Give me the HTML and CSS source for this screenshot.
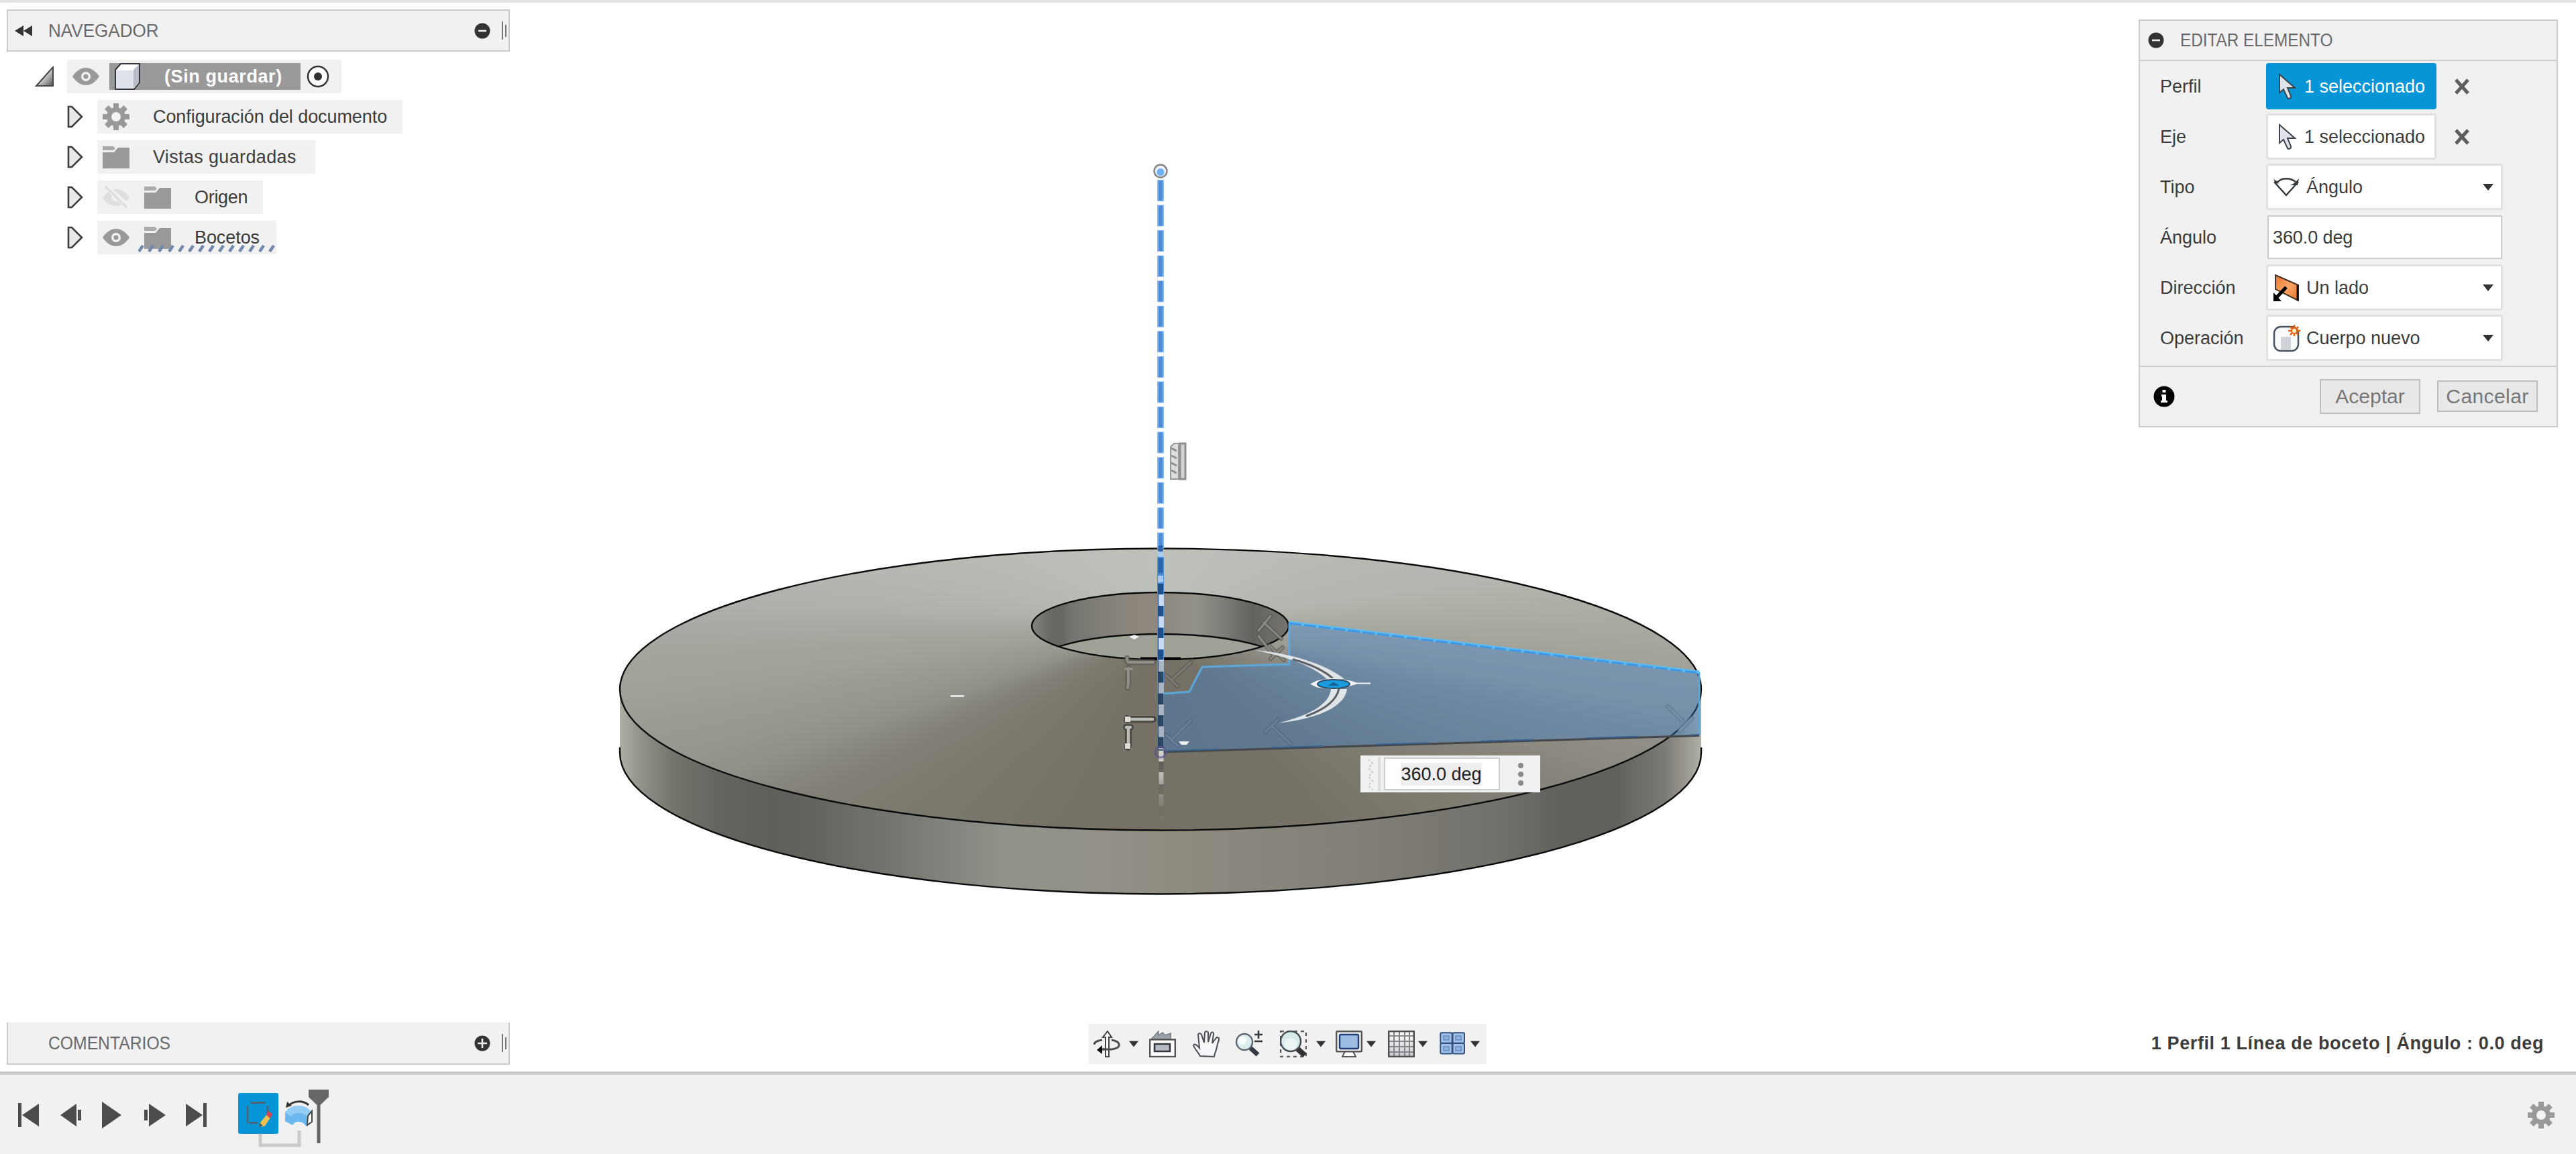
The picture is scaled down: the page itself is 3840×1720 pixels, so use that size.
FILE: index.html
```html
<!DOCTYPE html>
<html lang="es">
<head>
<meta charset="utf-8">
<title>Editar elemento</title>
<link rel="stylesheet" href="styles.css">
</head>
<body>
<svg class="defs" aria-hidden="true">
  <defs>
    <linearGradient id="gTri" x1="0" y1="0" x2="1" y2="1"><stop offset=".3" stop-color="#fff"/><stop offset="1" stop-color="#555"/></linearGradient>
    <linearGradient id="gPlane" x1="0" y1="0" x2="1" y2="1"><stop offset="0" stop-color="#e8742c"/><stop offset=".5" stop-color="#fba668"/><stop offset="1" stop-color="#e8742c"/></linearGradient>
    <linearGradient id="gGrid" x1="0" y1="0" x2="0" y2="1"><stop offset="0" stop-color="#fff"/><stop offset="1" stop-color="#c9ccd6"/></linearGradient>
    <symbol id="eye" viewBox="0 0 40 26"><path d="M0 13C6 4 13 0 20 0s14 4 20 13c-6 9-13 13-20 13S6 22 0 13z" fill="#999"/><circle cx="20" cy="13" r="7" fill="#f1f1f1"/><circle cx="20" cy="13" r="3.6" fill="#999"/></symbol>
    <symbol id="eyeoff" viewBox="0 0 40 34"><path d="M0 18C6 10 13 5 20 5s14 4 20 12c-6 9-13 13-20 13S6 27 0 18z" fill="#dedede"/><circle cx="20" cy="17" r="6.5" fill="#f1f1f1"/><path d="M4 0L39 32" stroke="#f1f1f1" stroke-width="8"/><path d="M4 1L36 32" stroke="#dcdcdc" stroke-width="3"/></symbol>
    <symbol id="folder" viewBox="0 0 40 34"><path d="M0 1h16l3 3-3 3H0z" fill="#aaa"/><path d="M0 10h17l6-7h17v31H0z" fill="#999"/></symbol>
    <symbol id="gear" viewBox="0 0 40 40"><g fill="#999"><path d="M16 0h8v40h-8z"/><path d="M16 0h8v40h-8z" transform="rotate(45 20 20)"/><path d="M16 0h8v40h-8z" transform="rotate(90 20 20)"/><path d="M16 0h8v40h-8z" transform="rotate(135 20 20)"/><circle cx="20" cy="20" r="14"/></g><circle cx="20" cy="20" r="7" fill="#f4f4f4"/></symbol>
    <symbol id="closed" viewBox="0 0 24 34"><path d="M2 2h5l15 15L7 32H2z" fill="#e6e8ea" stroke="#3c3c3c" stroke-width="2.6"/></symbol>
    <symbol id="pointer" viewBox="0 0 28 40"><path d="M2 2v27l6-5 6 13c2 2 6 0 5-3l-5-12h11z" fill="#dfe3ea" stroke="#3e444c" stroke-width="2"/></symbol>
    <symbol id="cross" viewBox="0 0 24 24"><path d="M3 2l18 20M21 2L3 22" stroke="#5e5e5e" stroke-width="5"/></symbol>
    <symbol id="caret" viewBox="0 0 16 10"><path d="M0 0h16L8 10z" fill="#333"/></symbol>
    <symbol id="minus" viewBox="0 0 24 24"><circle cx="12" cy="12" r="11.5" fill="#333"/><path d="M6 12h12" stroke="#eee" stroke-width="2.6"/></symbol>
    <symbol id="plus" viewBox="0 0 24 24"><circle cx="12" cy="12" r="11.5" fill="#333"/><path d="M5 12h14M12 5v14" stroke="#eee" stroke-width="2.6"/></symbol>
  </defs>
</svg>

<main class="workspace">
  <div class="model" aria-hidden="true">
    <div class="cone"></div>
    <svg class="scene" viewBox="0 0 3840 1597">
      <defs>
        <linearGradient id="rim" gradientUnits="userSpaceOnUse" x1="923" y1="0" x2="2537" y2="0">
          <stop offset="0" stop-color="#b0b0a7"/><stop offset=".02" stop-color="#92928a"/><stop offset=".05" stop-color="#74746d"/><stop offset=".09" stop-color="#65645e"/><stop offset=".14" stop-color="#605f59"/><stop offset=".18" stop-color="#64645f"/><stop offset=".25" stop-color="#74756f"/><stop offset=".36" stop-color="#92938b"/><stop offset=".45" stop-color="#929087"/><stop offset=".52" stop-color="#8e8a80"/><stop offset=".65" stop-color="#84827a"/><stop offset=".81" stop-color="#73716b"/><stop offset=".87" stop-color="#62605b"/><stop offset=".92" stop-color="#62605b"/><stop offset=".965" stop-color="#7b7973"/><stop offset="1" stop-color="#b2b1a8"/>
        </linearGradient>
        <linearGradient id="bore" gradientUnits="userSpaceOnUse" x1="1538" y1="0" x2="1921" y2="0">
          <stop offset="0" stop-color="#85847e"/><stop offset=".07" stop-color="#6a6963"/><stop offset=".12" stop-color="#66655f"/><stop offset=".15" stop-color="#74736d"/><stop offset=".3" stop-color="#84817a"/><stop offset=".38" stop-color="#8d867c"/><stop offset=".52" stop-color="#8e897f"/><stop offset=".64" stop-color="#92928a"/><stop offset=".75" stop-color="#7c7c76"/><stop offset=".86" stop-color="#63625d"/><stop offset="1" stop-color="#77746e"/>
        </linearGradient>
        <linearGradient id="fade" gradientUnits="userSpaceOnUse" x1="0" y1="1121" x2="0" y2="1236"><stop offset="0" stop-color="#d6d4d0"/><stop offset=".3" stop-color="#bcbab5"/><stop offset="1" stop-color="#76736a" stop-opacity="0"/></linearGradient>
        <linearGradient id="fadeDark" gradientUnits="userSpaceOnUse" x1="0" y1="1121" x2="0" y2="1236"><stop offset="0" stop-color="#5a5853"/><stop offset="1" stop-color="#76736a" stop-opacity="0"/></linearGradient>
        <clipPath id="boreClip"><ellipse cx="1729.500" cy="933" rx="191.500" ry="50"/></clipPath>
      </defs>

      <!-- rim and top face outline -->
      <path d="M924 1028V1122A806 210.500 0 0 0 2536 1122V1028A806 210 0 0 1 924 1028z" fill="url(#rim)"/>
      <g fill="none" stroke="#0b0b0b" stroke-width="2.400">
        <path d="M924 1114V1122A806 210.500 0 0 0 2536 1122V1114"/>
        <ellipse cx="1730" cy="1027.500" rx="806" ry="210"/>
      </g>

      <!-- central bore -->
      <ellipse cx="1729.500" cy="933" rx="191.500" ry="50" fill="url(#bore)"/>
      <g clip-path="url(#boreClip)"><ellipse cx="1729.500" cy="993" rx="191" ry="48" fill="#a0a298" stroke="#0b0b0b" stroke-width="2.400"/></g>
      <ellipse cx="1729.500" cy="933" rx="191.500" ry="50" fill="none" stroke="#0b0b0b" stroke-width="2.400"/>
      <path d="M1700 981.500h60" stroke="#050505" stroke-width="4"/>

      <!-- selected profile -->
      <path d="M1730 1034L1773 1031L1792 994L1922 990V928L2533 1002V1096L1730 1121z" fill="#3c80cd" fill-opacity=".39"/>
      <path d="M1732 1034L1773 1031L1792 994L1922 990V928M2533 1002V1096" fill="none" stroke="#5aa9dc" stroke-width="3"/>
      <path d="M1922 928L2533 1002" stroke="#5dbcf2" stroke-width="5"/>
      <path d="M1922 929L2533 1003" stroke="#3f97e4" stroke-width="3" stroke-dasharray="18 4"/>
      <path d="M1730 1121L2533 1096.500" stroke="#45464a" stroke-width="3"/>
      <path d="M1740 1119L2533 1095" stroke="#386390" stroke-width="2" stroke-dasharray="78 78"/>

      <!-- sketch constraint marks -->
      <g fill="none" stroke-linecap="round">
        <g stroke="#55534e" stroke-width="6" opacity=".7"><path d="M1876 940l18-22M1884 928l26 24M1876 948l22 28M1894 982l18-17M1892 962l22 22"/></g>
        <g stroke="#8b8983" stroke-width="3"><path d="M1876 940l18-22M1884 928l26 24M1876 948l22 28M1894 982l18-17M1892 962l22 22"/></g>
        <g stroke="#605e57" stroke-width="6"><path d="M1738 1006l18 17M1746 1014l29-27"/></g>
        <g stroke="#7f7c74" stroke-width="3"><path d="M1738 1006l18 17M1746 1014l29-27"/></g>
        <g stroke="#4f6780" stroke-width="6"><path d="M1738 1095l18 17M1746 1103l29-29M1886 1091l19-18M1896 1082l28 27"/></g>
        <g stroke="#687f97" stroke-width="3.500"><path d="M1738 1095l18 17M1746 1103l29-29M1886 1091l19-18M1896 1082l28 27"/></g>
        <g stroke="#617b95" stroke-width="6"><path d="M2486 1053l22 21M2504 1089l18-18"/></g>
        <g stroke="#7690a8" stroke-width="3.500"><path d="M2486 1053l22 21M2504 1089l18-18"/></g>
        <g stroke="#5c5a54" stroke-width="9" opacity=".65"><path d="M1680 981v3M1682 987h37M1682 996v24M1681 1023v2"/></g>
        <g stroke="#918e88" stroke-width="4"><path d="M1680 981v3M1682 987h37M1682 996v24M1681 1023v2M1678 997h9"/></g>
        <g stroke="#474641" stroke-width="10"><path d="M1680 1071v2M1684 1072h35M1682 1084v28M1681 1112v2M1679 1084h6"/></g>
        <g stroke="#bdbcb7" stroke-width="4.500"><path d="M1684 1072h34M1682 1084v28M1679 1084h6"/></g>
      </g>
      <path d="M1677 1068h8v8h-8zM1677 1108h8v8h-8z" fill="#dddcd9"/>
      <g fill="#f0f0ee"><path d="M1683 949l8-3 7 3-7 4z"/><path d="M1757 1105h16l-4 5h-8z"/><path d="M1417 1036h20v3h-20z" opacity=".85"/></g>

      <!-- rotation axis -->
      <path d="M1730 268V818" stroke="#86b9fa" stroke-width="10" stroke-dasharray="32 5.560"/>
      <path d="M1730 269V818" stroke="#4f8cd8" stroke-width="6" stroke-dasharray="30 7.560"/>
      <path d="M1730 830V1034" stroke="#4b8dd6" stroke-width="10"/>
      <path d="M1730 813v9M1730 832v22" stroke="#2b66ac" stroke-width="7"/>
      <path d="M1730 822v8M1730 858v10" stroke="#a9cbf1" stroke-width="8"/>
      <path d="M1730 870V985" stroke="#1f4f8a" stroke-width="8"/>
      <path d="M1730 985V1118" stroke="#2a4563" stroke-width="8"/>
      <path d="M1731 886V985" stroke="#c6d9f5" stroke-width="8" stroke-dasharray="17 15.500"/>
      <path d="M1731 985V1117" stroke="#a9b3c1" stroke-width="8" stroke-dasharray="16 16.500"/>
      <rect x="1727.500" y="1134" width="7" height="100" fill="url(#fadeDark)"/>
      <path d="M1727.500 1119h7v16h-7zM1727.500 1151h7v18h-7zM1727.500 1184h7v17h-7zM1727.500 1216h7v18h-7z" fill="url(#fade)"/>
      <circle cx="1730" cy="1121" r="8" fill="none" stroke="#5c5390" stroke-opacity=".7" stroke-width="3"/>
      <circle cx="1730" cy="255" r="9.500" fill="#edf4fd" stroke="#858585" stroke-width="2.500"/>
      <circle cx="1730" cy="256.500" r="5.500" fill="#6faff6"/>

      <!-- vertical constraint glyph -->
      <path d="M1757 661h-7l-5 5v48h12z" fill="#ddd" stroke="#999" stroke-width="2"/>
      <path d="M1746 668l8 4M1746 679l8 4M1746 690l8 4M1746 701l8 4" stroke="#8e8e8e" stroke-width="3"/>
      <path d="M1759 661h8v53h-8z" fill="#d2d2d2" stroke="#8e8e8e" stroke-width="3"/>

      <!-- angle manipulator -->
      <path d="M1870 969C1922 973 1977 990 2004 1012L1978 1012C1958 994 1925 980 1870 969zM2008 1027C2005 1051 1972 1070 1905 1078C1952 1066 1982 1050 1984 1027z" fill="#dfe4e9"/>
      <path d="M1928 983C1954 990 1976 1001 1989 1013M1996 1026C1993 1043 1978 1056 1948 1067" fill="none" stroke="#5c6065" stroke-width="3" stroke-linecap="round"/>
      <path d="M1953 1019.500l10-5 24-4 26 4 10 3h20v2h-20l-10 3-26 5-24-3z" fill="#f0f3f5"/>
      <ellipse cx="1988" cy="1019.500" rx="24" ry="6.500" fill="#1a9be0" stroke="#2d4a60" stroke-width="2"/>
      <path d="M1983 1021l5-3 5 3z" fill="none" stroke="#17618f" stroke-width="2"/>
    </svg>
    <div class="value-box">
      <svg class="grip" viewBox="0 0 14 50"><path d="M2 3l6 6-6 7 6 6-6 7 6 6-6 7 6 6" fill="none" stroke="#c8c8c8" stroke-width="2" stroke-dasharray="3 3"/></svg>
      <span class="rule"></span>
      <div class="value"><span>360.0 deg</span></div>
      <div class="dots"><i></i><i></i><i></i></div>
    </div>
  </div>

  <div class="upper">
    <aside>
      <header class="bar">
        <svg class="rewind" viewBox="0 0 26 16"><path d="M13 0v16L0 8zM26 0v16L13 8z" fill="#333"/></svg>
        <span class="title nav-title">NAVEGADOR</span>
        <svg class="i24 end"><use href="#minus"/></svg>
        <span class="handle"></span>
      </header>
      <div class="tree">
        <div class="node root">
          <svg class="open" viewBox="0 0 28 30"><path d="M27 1v28H2z" fill="url(#gTri)" stroke="#444" stroke-width="2"/></svg>
          <div class="pill">
            <svg class="eye"><use href="#eye"/></svg>
            <div class="doc">
              <svg class="i40" viewBox="0 0 40 40"><path d="M2 10l8-9h28v28l-8 10H2z" fill="#fff" stroke="#33363c" stroke-width="2"/><path d="M3 11h26v27H3z" fill="#dfe2ea"/><path d="M29 10l8-8v27l-8 9z" fill="#b8bcc6"/></svg>
              <b>(Sin guardar)</b>
            </div>
            <svg class="radio" viewBox="0 0 34 34"><circle cx="17" cy="17" r="15" fill="#fff" stroke="#333" stroke-width="2.500"/><circle cx="17" cy="17" r="6" fill="#333"/></svg>
          </div>
        </div>
        <div class="node"><svg class="closed"><use href="#closed"/></svg><div class="pill w455"><svg class="i40"><use href="#gear"/></svg><span>Configuración del documento</span></div></div>
        <div class="node"><svg class="closed"><use href="#closed"/></svg><div class="pill w325"><svg class="fold"><use href="#folder"/></svg><span class="loose">Vistas guardadas</span></div></div>
        <div class="node"><svg class="closed"><use href="#closed"/></svg><div class="pill w247"><svg class="fold"><use href="#eyeoff"/></svg><svg class="fold second"><use href="#folder"/></svg><span class="tight">Origen</span></div></div>
        <div class="node"><svg class="closed"><use href="#closed"/></svg><div class="pill w267"><svg class="eye"><use href="#eye"/></svg><svg class="fold second"><use href="#folder"/></svg><span>Bocetos</span>
          <svg class="hatch" viewBox="0 0 206 12"><path d="M1 11l6-9m9 9l6-9m9 9l6-9m9 9l6-9m9 9l6-9m9 9l6-9m9 9l6-9m9 9l6-9m9 9l6-9m9 9l6-9m9 9l6-9m9 9l6-9m9 9l6-9m9 9l6-9" fill="none" stroke="#7288ac" stroke-width="4.500"/></svg></div></div>
      </div>
    </aside>

    <section class="dialog">
      <header><svg class="i24"><use href="#minus"/></svg><span class="title dlg-title">EDITAR ELEMENTO</span></header>
      <div class="form">
        <div class="row"><label>Perfil</label><div class="pick on"><svg class="ptr"><use href="#pointer"/></svg>1 seleccionado</div><svg class="i24 clear"><use href="#cross"/></svg></div>
        <div class="row"><label>Eje</label><div class="pick"><svg class="ptr"><use href="#pointer"/></svg>1 seleccionado</div><svg class="i24 clear"><use href="#cross"/></svg></div>
        <div class="row"><label>Tipo</label><div class="select"><svg class="i40" viewBox="0 0 40 40"><path d="M2 12l18 20 18-20M7 13C12 6 25 5 34 12" fill="none" stroke="#33383e" stroke-width="2.400"/><path d="M1 8l5 9 2-5zM39 7l-2 10H26l6-3z" fill="#33383e"/></svg><span>Ángulo</span><svg class="caret"><use href="#caret"/></svg></div></div>
        <div class="row"><label>Ángulo</label><div class="input">360.0 deg</div></div>
        <div class="row"><label>Dirección</label><div class="select"><svg class="i40" viewBox="0 0 40 40"><path d="M4 1l34 15v23L4 22z" fill="url(#gPlane)" stroke="#4a3324" stroke-width="2"/><path d="M37 16v23" stroke="#111" stroke-width="3"/><path d="M20 19L6 34" stroke="#000" stroke-width="5"/><path d="M1 27v13h12z" fill="#000"/></svg><span>Un lado</span><svg class="caret"><use href="#caret"/></svg></div></div>
        <div class="row"><label>Operación</label><div class="select"><svg class="i40 body-icon" viewBox="0 0 42 42"><rect x="2" y="4" width="36" height="36" rx="10" fill="#fafafb" stroke="#4a5362" stroke-width="2.500"/><path d="M12 19h15v19H12z" fill="#cfd4da"/><path d="M32 1v17M23 10h18M26 4l12 12M38 4L26 16" stroke="#ea6212" stroke-width="2.600"/><circle cx="32" cy="10" r="4" fill="#fff3c8" stroke="#ea6212" stroke-width="2"/></svg><span>Cuerpo nuevo</span><svg class="caret"><use href="#caret"/></svg></div></div>
      </div>
      <footer>
        <svg class="info" viewBox="0 0 32 32"><circle cx="16" cy="16" r="15.500" fill="#000"/><path d="M13.500 6h5v4h-5zM12 13h7v9h2v3h-10v-3h2v-6h-1z" fill="#fff"/></svg>
        <button class="ok">Aceptar</button><button class="cancel">Cancelar</button>
      </footer>
    </section>
  </div>

  <div class="lower">
    <header class="bar comments">
      <span class="title com-title">COMENTARIOS</span>
      <svg class="i24 end"><use href="#plus"/></svg>
      <span class="handle"></span>
    </header>
    <nav class="tools">
      <svg class="i40" viewBox="0 0 40 40"><path d="M13 14C5 15 1 18 1 21M27 14c16 3 14 13 0 14l-16 0" fill="none" stroke="#4a4d50" stroke-width="3"/><path d="M18 39V10h-4l7-9 6 9h-4v29z" fill="#fff" stroke="#444" stroke-width="2"/><path d="M5 29l8-7v13z" fill="#111"/><path d="M13 28h10" stroke="#4a4d50" stroke-width="3"/></svg>
      <svg class="caret m13"><use href="#caret"/></svg>
      <svg class="i40 m16" viewBox="0 0 40 40"><path d="M3 13L14 1v6l6-4 4 4 8-3v9z" fill="#9aa1a8" stroke="#777e85" stroke-width="1.500"/><rect x="1.200" y="13.500" width="37.600" height="25.500" fill="#fff" stroke="#555" stroke-width="2.400"/><path d="M8 20h23v11H8z" fill="#b6bbc2" stroke="#33383e" stroke-width="2.600"/></svg>
      <svg class="i40 m25" viewBox="0 0 40 40"><path d="M11 38C8 32 3 28 1 22c1-3 5-1 9 4L8 6c1-3 4-2 5 0l4 12L18 3c1-3 4-2 5 0v14l4-13c1-2 4-2 4 1l-2 14 6-8c2-2 5 0 4 3-3 7-3 14-6 20l-1 5z" fill="#f6f6f8" stroke="#4a4f57" stroke-width="2"/></svg>
      <svg class="i40 m24" viewBox="0 0 40 40"><path d="M22 26l11 10" stroke="#353b42" stroke-width="7"/><circle cx="13" cy="17" r="12" fill="#dcefee" stroke="#5b6672" stroke-width="2.400"/><circle cx="10" cy="15" r="6" fill="#fff" opacity=".8"/><path d="M28 6h12M34 0v12M28 16h12" stroke="#33383e" stroke-width="2.600"/></svg>
      <svg class="i40 m26" viewBox="0 0 40 40"><path d="M1 1h38v38H1z" fill="none" stroke="#555" stroke-width="2.400" stroke-dasharray="5 5"/><path d="M26 27l11 10" stroke="#333" stroke-width="8"/><ellipse cx="16" cy="16" rx="15" ry="15" fill="#d7ebe8" stroke="#454b50" stroke-width="2.400"/><ellipse cx="16" cy="20" rx="10" ry="9" fill="#fff" opacity=".5"/></svg>
      <svg class="caret m14"><use href="#caret"/></svg>
      <svg class="i40 m15" viewBox="0 0 40 40"><path d="M14 31h12l4 8H10z" fill="#fff" stroke="#555" stroke-width="2"/><rect x="1.200" y="1.200" width="37.600" height="30" rx="1" fill="#fafafa" stroke="#555" stroke-width="2.400"/><rect x="6" y="6" width="28" height="21" rx="2" fill="#9dbde3" stroke="#1f3b73" stroke-width="2.400"/></svg>
      <svg class="caret m6"><use href="#caret"/></svg>
      <svg class="i40 m18" viewBox="0 0 40 40"><rect x="1.200" y="1.200" width="37.600" height="37.600" fill="url(#gGrid)"/><path d="M9 1v38M17 1v38M25 1v38M32 1v38M1 8h38M1 16h38M1 24h38M1 32h38" stroke="#858585" stroke-width="2"/><rect x="1.200" y="1.200" width="37.600" height="37.600" fill="none" stroke="#4e4e4e" stroke-width="2.400"/></svg>
      <svg class="caret m5"><use href="#caret"/></svg>
      <svg class="i40 m18" viewBox="0 0 40 40"><g fill="#a3c2ea" stroke="#34507f" stroke-width="2"><rect x="1.200" y="3.200" width="17.500" height="15.500" rx="2"/><rect x="19.500" y="3.200" width="17.500" height="15.500" rx="2"/><rect x="1.200" y="19" width="17.500" height="15.500" rx="2"/><rect x="19.500" y="19" width="17.500" height="15.500" rx="2"/></g><g fill="#8fb4e4" stroke="#6389bd" stroke-width="1.500"><path d="M6 8h8v6H6zM24 8h8v6h-8zM6 24h8v6H6zM24 24h8v6h-8z"/></g></svg>
      <svg class="caret m6"><use href="#caret"/></svg>
    </nav>
    <p class="status">1 Perfil 1 Línea de boceto | Ángulo : 0.0 deg</p>
  </div>
</main>

<footer class="timeline">
  <div class="playback">
    <svg viewBox="0 0 32 42"><path d="M0 3h5v36H0zM31 4v34L6 21z"/></svg>
    <svg viewBox="0 0 32 42"><path d="M24 4v34L0 21zM26 13h5v16h-5z"/></svg>
    <svg viewBox="0 0 32 42"><path d="M0 1v40l29-20z"/></svg>
    <svg viewBox="0 0 32 42"><path d="M0 13h5v16H0zM7 4v34l25-17z"/></svg>
    <svg viewBox="0 0 32 42"><path d="M0 4v34l25-17zM26 3h5v36h-5z"/></svg>
  </div>
  <svg class="features" viewBox="0 0 140 90">
    <path d="M33 66v18h58V62" fill="none" stroke="#cacaca" stroke-width="5"/>
    <rect x="0" y="6" width="60" height="61" rx="3" fill="#0696d7"/>
    <g fill="none" stroke="#4c6678" stroke-width="3"><path d="M18 20.500h23M14 25v26M44 25v14M17 50.500h12"/></g>
    <path d="M33 50l9-11 6 4-8 12-6 2z" fill="#f3c14e"/><path d="M32 50l-1 7 6-2z" fill="#4d5a60"/><path d="M42 39l3-6 6 4-3 7z" fill="#d8474f"/>
    <path d="M70 35C80 22 99 22 109 34l-1 16-7 5c-6-8-15-8-20-1l-11-6z" fill="#6cb7ee"/><path d="M70 35C80 22 99 22 109 34l-6 7c-8-7-18-7-24 0z" fill="#93cdf6"/>
    <path d="M104 40l6-7v16l-7 5z" fill="#fff" stroke="#444" stroke-width="2"/>
    <path d="M75 25C83 17 97 17 105 24" fill="none" stroke="#333" stroke-width="3"/><path d="M71 28l2-9 7 6z" fill="#333"/>
    <path d="M105 1h30v11l-12.500 12v57h-5V24L105 12z" fill="#666"/>
  </svg>
  <svg class="i40 settings"><use href="#gear"/></svg>
</footer>
</body>
</html>
```
FILE: styles.css
```css
* { box-sizing: border-box; }

html { height: 1720px; overflow: hidden; }
body {
  margin: 0;
  width: 3840px;
  height: 1720px;
  display: flex;
  flex-direction: column;
  overflow: hidden;
  background: #fff;
  color: #3c3c3c;
  font: 27px/30px "Liberation Sans", Arial, sans-serif;
}

svg { display: block; flex: none; }
.defs { position: absolute; width: 0; height: 0; }
.i24 { width: 24px; height: 24px; }
.i40 { width: 40px; height: 40px; }
.caret { width: 14px; height: 10px; }

/* workspace: model canvas with docked panels above it */
.workspace {
  position: relative;
  height: 1597px;
  border-top: 4px solid #e4e4e4;
  display: flex;
  flex-direction: column;
  justify-content: space-between;
}
.model { position: absolute; left: 0; top: -4px; width: 3840px; height: 1597px; }
.scene { position: absolute; left: 0; top: 0; width: 3840px; height: 1597px; }
.cone {
  position: absolute;
  left: 924px;
  top: 818px;
  width: 1612px;
  height: 420px;
  border-radius: 50%;
  background: conic-gradient(from 0deg at 50% 27%,
    #bec1ba 0deg, #babdb6 60deg, #b4b7af 82deg, #aaaca3 89deg, #a3a399 94deg,
    #9c9b91 99deg, #918f87 103deg, #86847b 111deg, #7d7a70 122deg, #767268 140deg,
    #757166 180deg, #767268 205deg, #79766b 225deg, #7c796f 236deg, #827f76 244deg,
    #89887f 248deg, #909088 251deg, #97978f 255deg, #9b9b93 259deg, #a3a59d 266deg,
    #a8aba3 270deg, #aeb1a9 273deg, #b5b8b0 280deg, #bbbeb7 300deg, #bec1ba 360deg);
}

.value-box {
  position: absolute;
  left: 2028px;
  top: 1126px;
  width: 268px;
  height: 55px;
  display: flex;
  align-items: center;
  background: #f1f1f1;
  color: #222;
}
.grip { width: 14px; height: 50px; margin-left: 10px; }
.rule { width: 4px; height: 51px; margin-left: 2px; background: #dcdcdc; }
.value {
  width: 173px;
  height: 49px;
  margin-left: 5px;
  padding-right: 2px;
  display: flex;
  align-items: center;
  justify-content: center;
  background: #fff;
  border: 2px solid #ccc;
}
.value span { background: #eee; line-height: 34px; }
.dots { display: flex; flex-direction: column; gap: 5px; margin-left: 27px; }
.dots i { width: 8px; height: 8px; border-radius: 50%; background: #8a8a8a; }

.upper, .lower { position: relative; display: flex; justify-content: space-between; }
.upper { padding: 10px 27px 0 10px; align-items: flex-start; }
.lower { height: 73px; padding: 0 48px 0 10px; align-items: flex-start; }

/* docked title bars */
.bar {
  width: 750px;
  height: 63px;
  display: flex;
  align-items: center;
  padding: 0 3px 0 10px;
  background: #f1f1f1;
  border: 2px solid #ccc;
}
.rewind { width: 26px; height: 16px; }
.title { color: #6a6a6a; transform-origin: left center; white-space: nowrap; }
.nav-title { margin-left: 24px; transform: scaleX(.965); }
.com-title { margin-left: 50px; transform: scaleX(.915); }
.dlg-title { margin-left: 24px; transform: scaleX(.9); }
.end { margin-left: auto; }
.handle { width: 7px; height: 27px; margin-left: 17px; background: linear-gradient(#777, #777) left / 2px 27px no-repeat, linear-gradient(#777, #777) right / 2px 18px no-repeat; }
.comments { border-top: 0; }

/* browser tree */
.tree { display: flex; flex-direction: column; gap: 10px; padding-top: 12px; }
.node { display: flex; align-items: center; height: 50px; padding-left: 90px; }
.root { padding-left: 42px; }
.open { width: 28px; height: 30px; margin-right: 20px; }
.closed { width: 24px; height: 34px; margin-right: 21px; }
.pill { position: relative; height: 50px; display: flex; align-items: center; padding-left: 8px; background: #f1f1f1; white-space: nowrap; }
.root .pill { width: 409px; }
.pill > span { margin-left: 35px; letter-spacing: -.08px; }
.pill > .loose { letter-spacing: .35px; }
.pill > .tight { letter-spacing: -.3px; }
.w455 { width: 455px; }
.w325 { width: 325px; }
.w247 { width: 247px; }
.w267 { width: 267px; }
.eye { width: 40px; height: 26px; }
.fold { width: 40px; height: 34px; }
.second { margin-left: 22px; }
.doc { width: 285px; height: 40px; margin-left: 15px; padding-left: 7px; display: flex; align-items: center; background: #999; color: #fff; }
.doc b { margin-left: 35px; letter-spacing: .6px; }
.radio { width: 34px; height: 34px; margin-left: 9px; }
.hatch { position: absolute; left: 61px; bottom: 3px; width: 206px; height: 12px; }

/* feature dialog */
.dialog { width: 625px; height: 608px; margin-top: 15px; background: #f1f1f1; border: 2px solid #ccc; }
.dialog > header { height: 60px; display: flex; align-items: center; padding-left: 12px; border-bottom: 2px solid #ccc; }
.form { height: 456px; border-bottom: 2px solid #ccc; }
.row { height: 75px; display: flex; align-items: center; }
.row label { width: 158px; margin-left: 30px; }
.pick, .select, .input { display: flex; align-items: center; height: 69px; background: #fff; border: 3px solid #e0e0e0; border-radius: 4px; white-space: nowrap; }
.pick { width: 254px; padding-left: 15px; }
.pick.on { background: #0696d7; border-color: #0696d7; color: #fff; }
.ptr { width: 28px; height: 40px; margin-right: 11px; }
.clear { margin-left: 26px; }
.select { width: 353px; padding: 0 11px 0 7px; }
.select span { margin-left: 10px; }
.select .body-icon { width: 42px; height: 42px; margin-right: -2px; }
.select .caret { width: 16px; margin-left: auto; }
.input { width: 350px; height: 65px; margin-left: 2px; padding-left: 6px; border: 2px solid #ccc; border-radius: 0; letter-spacing: -.1px; }
.dialog > footer { display: flex; align-items: center; height: 87px; padding-left: 20px; }
.info { width: 32px; height: 32px; }
button { width: 150px; padding: 0; font: 30px/34px "Liberation Sans", Arial, sans-serif; color: #777; background: #e8e8e8; border: 2px solid #bdbdbd; }
.ok { height: 52px; margin-left: 216px; }
.cancel { height: 47px; margin-left: 25px; letter-spacing: .4px; }

/* view toolbar and status */
.tools { position: absolute; left: 1623px; top: 2px; width: 593px; height: 60px; display: flex; align-items: center; padding-left: 7px; background: #f1f1f1; }
.m5 { margin-left: 5px; }
.m6 { margin-left: 6px; }
.m13 { margin-left: 13px; }
.m14 { margin-left: 14px; }
.m15 { margin-left: 15px; }
.m16 { margin-left: 16px; }
.m18 { margin-left: 18px; }
.m24 { margin-left: 24px; }
.m25 { margin-left: 25px; }
.m26 { margin-left: 26px; }
.status { margin: 16px 0 0; font-weight: bold; letter-spacing: .6px; white-space: nowrap; }

/* timeline */
.timeline { height: 123px; display: flex; align-items: flex-start; background: #f1f1f1; border-top: 5px solid #ccc; padding: 0 32px 0 27px; }
.playback { display: flex; gap: 30.500px; margin-top: 39px; fill: #4c4c4e; }
.playback svg { width: 32px; height: 42px; }
.features { width: 140px; height: 90px; margin-left: 46px; margin-top: 21px; }
.settings { margin: 40px 0 0 auto; }
```
